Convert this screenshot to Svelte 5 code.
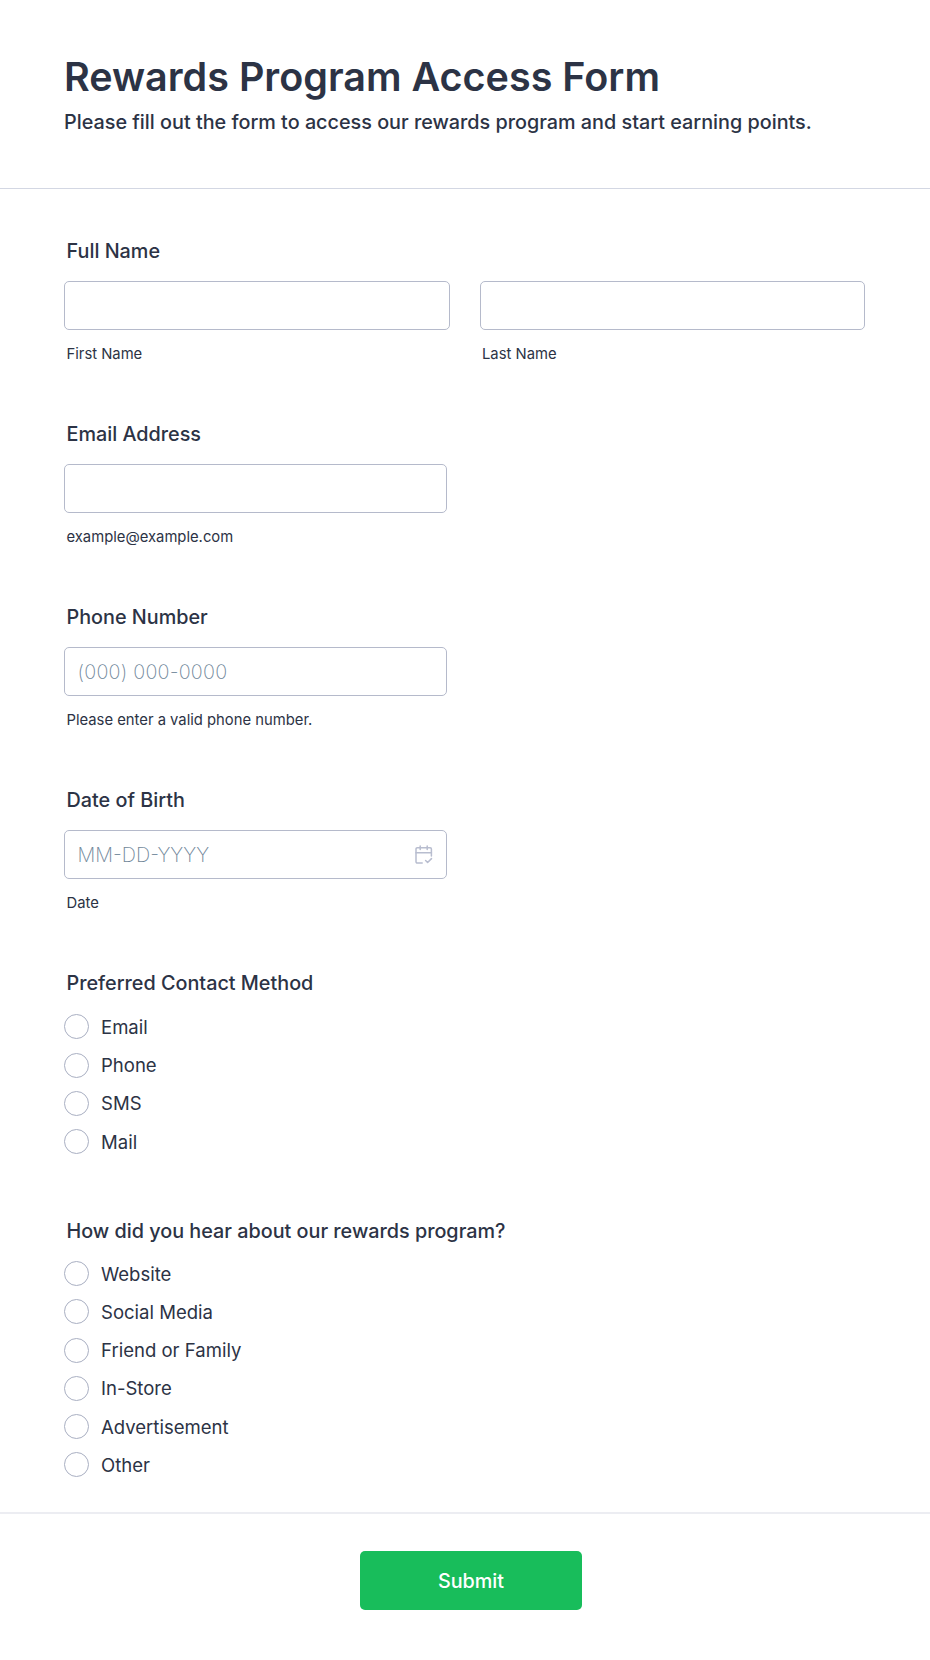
<script lang="ts">
  // Options for the two radio questions
  const contactMethods: string[] = ['Email', 'Phone', 'SMS', 'Mail'];
  const sources: string[] = [
    'Website',
    'Social Media',
    'Friend or Family',
    'In-Store',
    'Advertisement',
    'Other'
  ];

  // Form values
  let firstName = '';
  let lastName = '';
  let email = '';
  let phone = '';
  let birthDate = '';
  let contactMethod = '';
  let source = '';
</script>

<form class="form" on:submit|preventDefault>
  <header class="header">
    <h1>Rewards Program Access Form</h1>
    <p>Please fill out the form to access our rewards program and start earning points.</p>
  </header>

  <div class="fields">
    <div class="field">
      <label class="label" for="first">Full Name</label>
      <div class="name-row">
        <div>
          <input class="input" id="first" type="text" bind:value={firstName} />
          <label class="hint" for="first">First Name</label>
        </div>
        <div>
          <input class="input" id="last" type="text" bind:value={lastName} />
          <label class="hint" for="last">Last Name</label>
        </div>
      </div>
    </div>

    <div class="field">
      <label class="label" for="email">Email Address</label>
      <input class="input half" id="email" type="email" bind:value={email} />
      <label class="hint" for="email">example@example.com</label>
    </div>

    <div class="field">
      <label class="label" for="phone">Phone Number</label>
      <input class="input half" id="phone" type="tel" placeholder="(000) 000-0000" bind:value={phone} />
      <label class="hint" for="phone">Please enter a valid phone number.</label>
    </div>

    <div class="field">
      <label class="label" for="birth">Date of Birth</label>
      <div class="input half date">
        <input id="birth" type="text" placeholder="MM-DD-YYYY" bind:value={birthDate} />
        <svg width="18" height="20" viewBox="0 0 18 20" fill="none" stroke="currentColor" stroke-width="1.5" stroke-linecap="round" stroke-linejoin="round">
          <path d="M7.2 18H2.2A1.2 1.2 0 0 1 1 16.8V4A1.2 1.2 0 0 1 2.2 2.8H15.2A1.2 1.2 0 0 1 16.4 4V11" />
          <path d="M1 7.8H16.4M5.2 1V4.5M12.2 1V4.5M10.6 15.5L12.6 17.5L16.5 13.6" />
        </svg>
      </div>
      <label class="hint" for="birth">Date</label>
    </div>

    <div class="field contact">
      <div class="label">Preferred Contact Method</div>
      <div class="options">
        {#each contactMethods as option}
          <label class="option">
            <input type="radio" name="contact" value={option} bind:group={contactMethod} />
            <span>{option}</span>
          </label>
        {/each}
      </div>
    </div>

    <div class="field source">
      <div class="label">How did you hear about our rewards program?</div>
      <div class="options">
        {#each sources as option}
          <label class="option">
            <input type="radio" name="source" value={option} bind:group={source} />
            <span>{option}</span>
          </label>
        {/each}
      </div>
    </div>
  </div>

  <footer class="footer">
    <button type="submit">Submit</button>
  </footer>
</form>

<style>
  :global(body) {
    margin: 0;
    background: #fff;
  }

  .form {
    box-sizing: border-box;
    width: 930px;
    height: 1660px;
    overflow: hidden;
    color: #2c3345;
    font-family: Inter, "Liberation Sans", sans-serif;
    font-size: 19.8px;
  }

  .header {
    box-sizing: border-box;
    height: 189px;
    padding: 53px 64px 0;
    border-bottom: 1px solid #d3d7e3;
  }

  h1 {
    margin: 0;
    font-size: 39.5px;
    line-height: 48px;
    font-weight: 600;
    white-space: nowrap;
  }

  p {
    margin: 9px 0 0;
    line-height: 24px;
    font-weight: 500;
    white-space: nowrap;
  }

  .fields {
    padding: 50px 65px 0 64px;
  }

  .field {
    height: 183px;
  }

  .contact {
    height: 248px;
  }

  .source {
    height: 293px;
  }

  .label {
    display: block;
    height: 24px;
    padding-left: 2.5px;
    margin-bottom: 18px;
    line-height: 24px;
    font-weight: 500;
  }

  .name-row {
    display: grid;
    grid-template-columns: 1fr 1fr;
    gap: 30px;
  }

  .input {
    display: block;
    box-sizing: border-box;
    width: 100%;
    height: 49px;
    padding: 0 13px 0 12.5px;
    border: 1px solid #b5bacb;
    border-radius: 5px;
    background: #fff;
    color: inherit;
    font: inherit;
  }

  .half {
    width: 383px;
  }

  .date {
    display: flex;
    align-items: center;
    color: #b8bdcf;
  }

  .date input {
    flex: 1;
    min-width: 0;
    padding: 0;
    border: 0;
    color: #2c3345;
    font: inherit;
  }

  input::placeholder {
    color: #6f8699;
    font-weight: 250;
    opacity: 1;
  }

  #phone::placeholder {
    letter-spacing: 0.2px;
  }

  .hint {
    display: block;
    padding-left: 2.5px;
    margin-top: 15px;
    font-size: 14.8px;
    line-height: 18px;
  }

  .options {
    display: flex;
    flex-direction: column;
    gap: 13.3px;
  }

  .contact .options {
    margin-top: 19.3px;
  }

  .contact .label {
    margin-bottom: 0;
  }

  .option {
    display: flex;
    align-items: center;
    gap: 12px;
    height: 25px;
    font-size: 18.55px;
    line-height: 24px;
  }

  .option input {
    appearance: none;
    box-sizing: border-box;
    flex: none;
    width: 25px;
    height: 25px;
    margin: 0;
    border: 1px solid #a9afc2;
    border-radius: 50%;
  }

  .option input:checked {
    border: 7px solid #18bd5b;
  }

  .footer {
    display: flex;
    justify-content: center;
    padding: 37px 0 0 12px;
    border-top: 2px solid #ecedf2;
  }

  button {
    width: 222px;
    height: 59px;
    border: 0;
    border-radius: 5px;
    background: #18bd5b;
    color: #fff;
    font: inherit;
    font-weight: 500;
    cursor: pointer;
  }
</style>
